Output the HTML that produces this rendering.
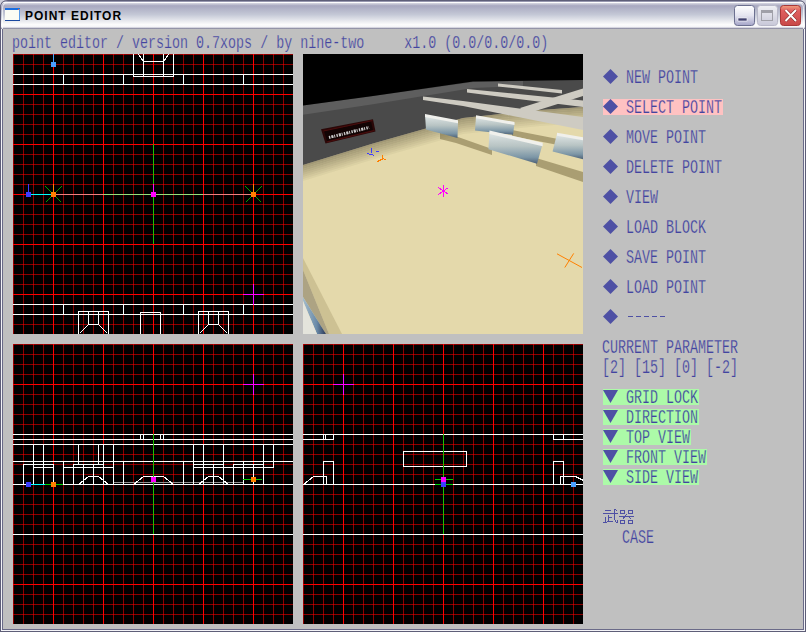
<!DOCTYPE html>
<html><head><meta charset="utf-8"><style>
html,body{margin:0;padding:0;width:806px;height:632px;overflow:hidden;background:#d0d0dc}
.t{position:absolute;white-space:pre;font-family:"Liberation Mono",monospace;color:#4244a0;line-height:16px;transform-origin:0 0;}
.title{position:absolute;left:25px;top:7px;font-family:"Liberation Sans",sans-serif;font-weight:bold;font-size:12px;line-height:18px;color:#000;letter-spacing:1px;white-space:pre}
</style></head><body>
<svg width="806" height="632" style="position:absolute;left:0;top:0">
<defs>
<linearGradient id="tb" gradientUnits="userSpaceOnUse" x1="0" y1="0" x2="0" y2="29">
<stop offset="0" stop-color="#5e5e78"/>
<stop offset="0.035" stop-color="#5e5e78"/>
<stop offset="0.036" stop-color="#9898b0"/>
<stop offset="0.07" stop-color="#9898b0"/>
<stop offset="0.071" stop-color="#f8f8fc"/>
<stop offset="0.105" stop-color="#f8f8fc"/>
<stop offset="0.12" stop-color="#d0d0dc"/>
<stop offset="0.2" stop-color="#a8a8c0"/>
<stop offset="0.5" stop-color="#c4c8d6"/>
<stop offset="0.85" stop-color="#fcfcfc"/>
<stop offset="0.93" stop-color="#f4f4f8"/>
<stop offset="0.965" stop-color="#b8b8c8"/>
<stop offset="1" stop-color="#707088"/>
</linearGradient>
<linearGradient id="minb" x1="0" y1="0" x2="0" y2="1">
<stop offset="0" stop-color="#ffffff"/><stop offset="0.5" stop-color="#e4e4f0"/><stop offset="1" stop-color="#a4a4c8"/></linearGradient>
<linearGradient id="maxb" x1="0" y1="0" x2="0" y2="1">
<stop offset="0" stop-color="#f0f0f4"/><stop offset="1" stop-color="#c8c8d8"/></linearGradient>
<linearGradient id="clsb" x1="0" y1="0" x2="0" y2="1">
<stop offset="0" stop-color="#f0a080"/><stop offset="0.25" stop-color="#e06060"/><stop offset="1" stop-color="#c84848"/></linearGradient>
</defs>
<rect x="0" y="0" width="806" height="632" fill="#d0d0dc" />
<path d="M0,8 Q0,0 8,0 L798,0 Q806,0 806,8 L806,632 L0,632 Z" fill="#5e5e78"/>
<path d="M1,8 Q1,1 8,1 L798,1 Q805,1 805,8 L805,631 L1,631 Z" fill="#f4f4f8"/>
<path d="M1,8 Q1,1 8,1 L798,1 Q805,1 805,8 L805,29 L1,29 Z" fill="url(#tb)"/>
<path d="M2.5,29 L2.5,8.5 Q2.5,2.5 8.5,2.5 L797.5,2.5 Q803.5,2.5 803.5,8.5 L803.5,29" fill="none" stroke="#ffffff" stroke-opacity="0.7"/>
<rect x="2" y="29" width="802" height="601" fill="#6a6a88" />
<rect x="3" y="29" width="800" height="600" fill="#c0c0c0" />
<rect x="5" y="8" width="15" height="2" fill="#1a6ee0" />
<rect x="5" y="10" width="14" height="10" fill="#fcfcf4" />
<rect x="19" y="9" width="1" height="11" fill="#5a9ae8" />
<rect x="5" y="20" width="15" height="1" fill="#1a48a0" />
<rect x="18" y="9" width="1" height="1" fill="#f06030" />
<rect x="734.5" y="5.5" width="20" height="20" rx="3" fill="url(#minb)" stroke="#6c7090"/>
<rect x="738" y="18" width="9" height="3" fill="#404070" stroke="#ffffff" stroke-width="0.6"/>
<rect x="757.5" y="5.5" width="20" height="20" rx="3" fill="url(#maxb)" stroke="#b8b8c8"/>
<rect x="761.5" y="10.5" width="11" height="10" fill="none" stroke="#a0a0a8"/>
<rect x="761" y="10" width="12" height="3" fill="#a0a0a8" />
<rect x="780.5" y="5.5" width="20" height="20" rx="3" fill="url(#clsb)" stroke="#a83838"/>
<path d="M785.5,10 L796,21 M796,10 L785.5,21" stroke="#7a2020" stroke-width="3.2"/>
<path d="M785.5,10 L796,21 M796,10 L785.5,21" stroke="#ffffff" stroke-width="2"/>
<g shape-rendering="crispEdges">
</g>
<rect x="13" y="54" width="280" height="280" fill="#000" />
<rect x="13" y="54" width="1" height="280" fill="rgba(255,0,0,0.55)" />
<rect x="23" y="54" width="1" height="280" fill="rgba(255,0,0,0.55)" />
<rect x="33" y="54" width="1" height="280" fill="rgba(255,0,0,0.55)" />
<rect x="43" y="54" width="1" height="280" fill="rgba(255,0,0,0.55)" />
<rect x="63" y="54" width="1" height="280" fill="rgba(255,0,0,0.55)" />
<rect x="73" y="54" width="1" height="280" fill="rgba(255,0,0,0.55)" />
<rect x="83" y="54" width="1" height="280" fill="rgba(255,0,0,0.55)" />
<rect x="93" y="54" width="1" height="280" fill="rgba(255,0,0,0.55)" />
<rect x="113" y="54" width="1" height="280" fill="rgba(255,0,0,0.55)" />
<rect x="123" y="54" width="1" height="280" fill="rgba(255,0,0,0.55)" />
<rect x="133" y="54" width="1" height="280" fill="rgba(255,0,0,0.55)" />
<rect x="143" y="54" width="1" height="280" fill="rgba(255,0,0,0.55)" />
<rect x="163" y="54" width="1" height="280" fill="rgba(255,0,0,0.55)" />
<rect x="173" y="54" width="1" height="280" fill="rgba(255,0,0,0.55)" />
<rect x="183" y="54" width="1" height="280" fill="rgba(255,0,0,0.55)" />
<rect x="193" y="54" width="1" height="280" fill="rgba(255,0,0,0.55)" />
<rect x="213" y="54" width="1" height="280" fill="rgba(255,0,0,0.55)" />
<rect x="223" y="54" width="1" height="280" fill="rgba(255,0,0,0.55)" />
<rect x="233" y="54" width="1" height="280" fill="rgba(255,0,0,0.55)" />
<rect x="243" y="54" width="1" height="280" fill="rgba(255,0,0,0.55)" />
<rect x="263" y="54" width="1" height="280" fill="rgba(255,0,0,0.55)" />
<rect x="273" y="54" width="1" height="280" fill="rgba(255,0,0,0.55)" />
<rect x="283" y="54" width="1" height="280" fill="rgba(255,0,0,0.55)" />
<rect x="13" y="54" width="280" height="1" fill="rgba(255,0,0,0.55)" />
<rect x="13" y="64" width="280" height="1" fill="rgba(255,0,0,0.55)" />
<rect x="13" y="74" width="280" height="1" fill="rgba(255,0,0,0.55)" />
<rect x="13" y="84" width="280" height="1" fill="rgba(255,0,0,0.55)" />
<rect x="13" y="104" width="280" height="1" fill="rgba(255,0,0,0.55)" />
<rect x="13" y="114" width="280" height="1" fill="rgba(255,0,0,0.55)" />
<rect x="13" y="124" width="280" height="1" fill="rgba(255,0,0,0.55)" />
<rect x="13" y="134" width="280" height="1" fill="rgba(255,0,0,0.55)" />
<rect x="13" y="154" width="280" height="1" fill="rgba(255,0,0,0.55)" />
<rect x="13" y="164" width="280" height="1" fill="rgba(255,0,0,0.55)" />
<rect x="13" y="174" width="280" height="1" fill="rgba(255,0,0,0.55)" />
<rect x="13" y="184" width="280" height="1" fill="rgba(255,0,0,0.55)" />
<rect x="13" y="204" width="280" height="1" fill="rgba(255,0,0,0.55)" />
<rect x="13" y="214" width="280" height="1" fill="rgba(255,0,0,0.55)" />
<rect x="13" y="224" width="280" height="1" fill="rgba(255,0,0,0.55)" />
<rect x="13" y="234" width="280" height="1" fill="rgba(255,0,0,0.55)" />
<rect x="13" y="254" width="280" height="1" fill="rgba(255,0,0,0.55)" />
<rect x="13" y="264" width="280" height="1" fill="rgba(255,0,0,0.55)" />
<rect x="13" y="274" width="280" height="1" fill="rgba(255,0,0,0.55)" />
<rect x="13" y="284" width="280" height="1" fill="rgba(255,0,0,0.55)" />
<rect x="13" y="304" width="280" height="1" fill="rgba(255,0,0,0.55)" />
<rect x="13" y="314" width="280" height="1" fill="rgba(255,0,0,0.55)" />
<rect x="13" y="324" width="280" height="1" fill="rgba(255,0,0,0.55)" />
<rect x="53" y="54" width="1" height="280" fill="#ff0000" />
<rect x="103" y="54" width="1" height="280" fill="#ff0000" />
<rect x="153" y="54" width="1" height="280" fill="#ff0000" />
<rect x="203" y="54" width="1" height="280" fill="#ff0000" />
<rect x="253" y="54" width="1" height="280" fill="#ff0000" />
<rect x="13" y="94" width="280" height="1" fill="#ff0000" />
<rect x="13" y="144" width="280" height="1" fill="#ff0000" />
<rect x="13" y="194" width="280" height="1" fill="#ff0000" />
<rect x="13" y="244" width="280" height="1" fill="#ff0000" />
<rect x="13" y="294" width="280" height="1" fill="#ff0000" />
<g shape-rendering="crispEdges">
<rect x="13" y="74" width="280" height="1" fill="#ffffff" />
<rect x="13" y="84" width="280" height="1" fill="#ffffff" />
<rect x="13" y="304" width="280" height="1" fill="#ffffff" />
<rect x="13" y="314" width="280" height="1" fill="#ffffff" />
<rect x="63" y="74" width="1" height="11" fill="#ffffff" />
<rect x="63" y="304" width="1" height="11" fill="#ffffff" />
<rect x="123" y="74" width="1" height="11" fill="#ffffff" />
<rect x="123" y="304" width="1" height="11" fill="#ffffff" />
<rect x="183" y="74" width="1" height="11" fill="#ffffff" />
<rect x="183" y="304" width="1" height="11" fill="#ffffff" />
<rect x="243" y="74" width="1" height="11" fill="#ffffff" />
<rect x="243" y="304" width="1" height="11" fill="#ffffff" />
<rect x="133" y="54" width="1" height="23" fill="#ffffff" />
<rect x="143" y="54" width="1" height="23" fill="#ffffff" />
<rect x="163" y="54" width="1" height="23" fill="#ffffff" />
<rect x="173" y="54" width="1" height="23" fill="#ffffff" />
<rect x="143" y="61" width="21" height="1" fill="#ffffff" />
<rect x="133" y="76" width="41" height="1" fill="#ffffff" />
<rect x="78" y="311" width="1" height="23" fill="#ffffff" />
<rect x="108" y="311" width="1" height="23" fill="#ffffff" />
<rect x="88" y="311" width="1" height="14" fill="#ffffff" />
<rect x="98" y="311" width="1" height="14" fill="#ffffff" />
<rect x="78" y="311" width="31" height="1" fill="#ffffff" />
<rect x="88" y="324" width="11" height="1" fill="#ffffff" />
<rect x="198" y="311" width="1" height="23" fill="#ffffff" />
<rect x="228" y="311" width="1" height="23" fill="#ffffff" />
<rect x="208" y="311" width="1" height="14" fill="#ffffff" />
<rect x="218" y="311" width="1" height="14" fill="#ffffff" />
<rect x="198" y="311" width="31" height="1" fill="#ffffff" />
<rect x="208" y="324" width="11" height="1" fill="#ffffff" />
<rect x="140" y="312" width="1" height="22" fill="#ffffff" />
<rect x="160" y="312" width="1" height="22" fill="#ffffff" />
<rect x="140" y="312" width="21" height="1" fill="#ffffff" />
</g>
<line x1="138.5" y1="54.5" x2="143.5" y2="61.5" stroke="#ffffff" stroke-width="1" shape-rendering="crispEdges"/>
<line x1="168.5" y1="54.5" x2="163.5" y2="61.5" stroke="#ffffff" stroke-width="1" shape-rendering="crispEdges"/>
<line x1="88.5" y1="324.5" x2="79.5" y2="333.5" stroke="#ffffff" stroke-width="1" shape-rendering="crispEdges"/>
<line x1="98.5" y1="324.5" x2="107.5" y2="333.5" stroke="#ffffff" stroke-width="1" shape-rendering="crispEdges"/>
<line x1="208.5" y1="324.5" x2="199.5" y2="333.5" stroke="#ffffff" stroke-width="1" shape-rendering="crispEdges"/>
<line x1="218.5" y1="324.5" x2="227.5" y2="333.5" stroke="#ffffff" stroke-width="1" shape-rendering="crispEdges"/>
<g shape-rendering="crispEdges">
<rect x="53" y="54" width="1" height="8" fill="#4aa0ff" />
<rect x="51" y="62" width="5" height="5" fill="#4aa0ff" />
<rect x="31" y="194" width="20" height="1" fill="#00ffff" />
<rect x="56" y="194" width="47" height="1" fill="#f08080" />
<rect x="103" y="194" width="48" height="1" fill="#96e07a" />
<rect x="156" y="194" width="47" height="1" fill="#96e07a" />
<rect x="203" y="194" width="48" height="1" fill="#f08080" />
<rect x="153" y="144" width="1" height="40" fill="#20c000" />
<rect x="153" y="197" width="1" height="47" fill="#20c000" />
<rect x="28" y="184" width="1" height="8" fill="#3c3cff" />
<rect x="26" y="192" width="5" height="5" fill="#3c3cff" />
<rect x="53" y="184" width="1" height="8" fill="#ff8000" />
<rect x="153" y="184" width="1" height="8" fill="#ff00ff" />
<rect x="151" y="192" width="5" height="5" fill="#ff00ff" />
<rect x="253" y="184" width="1" height="8" fill="#ff8000" />
<rect x="243" y="294" width="21" height="1" fill="#ff00ff" />
<rect x="253" y="284" width="1" height="21" fill="#ff00ff" />
</g>
<line x1="45.5" y1="186.5" x2="61.5" y2="202.5" stroke="#00a000" stroke-width="1" shape-rendering="crispEdges"/>
<line x1="45.5" y1="202.5" x2="61.5" y2="186.5" stroke="#00a000" stroke-width="1" shape-rendering="crispEdges"/>
<line x1="245.5" y1="186.5" x2="261.5" y2="202.5" stroke="#00a000" stroke-width="1" shape-rendering="crispEdges"/>
<line x1="245.5" y1="202.5" x2="261.5" y2="186.5" stroke="#00a000" stroke-width="1" shape-rendering="crispEdges"/>
<g shape-rendering="crispEdges">
<rect x="51" y="192" width="5" height="5" fill="#ff8000" />
<rect x="251" y="192" width="5" height="5" fill="#ff8000" />
</g>
<svg x="303" y="54" width="280" height="280" viewBox="303 54 280 280">
<defs>
<linearGradient id="bar" x1="0" y1="0" x2="0" y2="1">
<stop offset="0" stop-color="#e2e8e8"/><stop offset="0.45" stop-color="#b8c4c4"/><stop offset="0.8" stop-color="#7c96a6"/><stop offset="1" stop-color="#4c6076"/></linearGradient>
<linearGradient id="shad" x1="0" y1="0" x2="0" y2="1">
<stop offset="0" stop-color="#6e6a5a"/><stop offset="0.5" stop-color="#a89e7c"/><stop offset="1" stop-color="#e2d6a6" stop-opacity="0"/></linearGradient>
<linearGradient id="blueedge" x1="0" y1="0" x2="1" y2="0">
<stop offset="0" stop-color="#a4bccc"/><stop offset="0.6" stop-color="#6a8aa8"/><stop offset="1" stop-color="#2a3656"/></linearGradient>
</defs>
<rect x="303" y="54" width="280" height="280" fill="#e4d9ab" />
<polygon points="303,165 373,143.4 463,118 540,110 583,107 583,109 540,112 463,120 373,145.4 303,167" fill="rgba(96,88,64,0.500)" />
<polygon points="303,167 373,145.4 463,120 540,112 583,109 583,111 540,114 463,122 373,147.4 303,169" fill="rgba(96,88,64,0.438)" />
<polygon points="303,169 373,147.4 463,122 540,114 583,111 583,113 540,116 463,124 373,149.4 303,171" fill="rgba(96,88,64,0.375)" />
<polygon points="303,171 373,149.4 463,124 540,116 583,113 583,115 540,118 463,126 373,151.4 303,173" fill="rgba(96,88,64,0.312)" />
<polygon points="303,173 373,151.4 463,126 540,118 583,115 583,117 540,120 463,128 373,153.4 303,175" fill="rgba(96,88,64,0.250)" />
<polygon points="303,175 373,153.4 463,128 540,120 583,117 583,119 540,122 463,130 373,155.4 303,177" fill="rgba(96,88,64,0.188)" />
<polygon points="303,177 373,155.4 463,130 540,122 583,119 583,121 540,124 463,132 373,157.4 303,179" fill="rgba(96,88,64,0.125)" />
<polygon points="303,179 373,157.4 463,132 540,124 583,121 583,123 540,126 463,134 373,159.4 303,181" fill="rgba(96,88,64,0.062)" />
<polygon points="303,104.6 373,95 473,80.5 583,79 583,107 540,110 463,118 373,143.4 303,165" fill="#4a4a4a" />
<polygon points="303,105.6 373,96 473,82 523,81 523,86 473,88 373,104.3 303,114.7" fill="#5e5e5e" />
<polygon points="303,54 583,54 583,80 473,81.5 373,96 303,105.6" fill="#000" />
<polygon points="498,83.5 562,90 562,93.5 498,86.5" fill="#cecbc2" />
<polygon points="467,89 583,100.5 583,107 467,92.5" fill="#cecbc2" />
<polygon points="423,96.5 463,100.9 583,117 583,130 463,106 423,100" fill="#cecbc2" />
<polygon points="520,108 583,88.5 583,96 526,114" fill="#cecbc2" />
<polygon points="440,133 458,137 492,149 492,155 456,143 440,139" fill="rgba(100,86,44,0.45)" />
<polygon points="512,130 558,139 558,145 512,136" fill="rgba(100,86,44,0.45)" />
<polygon points="536,158 583,172 583,182 536,166" fill="rgba(100,86,44,0.45)" />
<polygon points="425,115 458,121.3 457.5,138 426,129.5" fill="url(#bar)" />
<polygon points="476,116.3 514.5,123 513,134.8 475,130.5" fill="url(#bar)" />
<polygon points="489.5,131.6 542.7,143.8 537,163.7 488.4,149.3" fill="url(#bar)" />
<polygon points="557,133.8 583,138.2 583,159.3 552.6,151.5" fill="url(#bar)" />
<polygon points="425,114 458,120.3 458,123.3 425,117" fill="#f0f0ec" />
<polygon points="476,115.3 514.5,122 514.5,125 476,118.3" fill="#f0f0ec" />
<polygon points="489.5,130.6 542.7,142.8 542.7,146.3 489.5,134.1" fill="#f0f0ec" />
<polygon points="557,132.8 583,137.2 583,140.2 557,135.8" fill="#f0f0ec" />
<polygon points="321,129.3 373,119.3 375.5,131.4 325.5,143.5" fill="#2a0808" />
<polygon points="324,131 371,121.5 373,130 327,141" fill="#120404" />
<path d="M329,137.5 L369,127.5" stroke="#c8c8c8" stroke-width="3" stroke-dasharray="1.4 1 2.2 0.8 1 1.3"/>
<path d="M323.5,131 L372.5,120.5 M327,142 L374.5,130.5" stroke="#4a0c0c" stroke-width="1"/>
<polygon points="303,258 342,334 329,334 303,270" fill="#cdc193" />
<polygon points="303,270 329,334 326,334 303,297" fill="#ada383" />
<polygon points="303,297 326,334 317,334 303,301" fill="url(#blueedge)" />
<polygon points="303,301 317,334 303,334" fill="#e4e4dc" />
<g stroke-width="1">
<line x1="371.5" y1="147.5" x2="371.5" y2="152.5" stroke="#3c3cff" stroke-width="1" shape-rendering="crispEdges"/>
<line x1="367.5" y1="153.5" x2="374.5" y2="155.5" stroke="#3c3cff" stroke-width="1" shape-rendering="crispEdges"/>
<line x1="375.5" y1="151.5" x2="378.5" y2="151.5" stroke="#3c3cff" stroke-width="1" shape-rendering="crispEdges"/>
<line x1="382.5" y1="154.5" x2="382.5" y2="158.5" stroke="#ff8000" stroke-width="1" shape-rendering="crispEdges"/>
<line x1="377.5" y1="161.5" x2="383.5" y2="158.5" stroke="#ff8000" stroke-width="1" shape-rendering="crispEdges"/>
<line x1="383.5" y1="158.5" x2="386.5" y2="160.5" stroke="#ff8000" stroke-width="1" shape-rendering="crispEdges"/>
</g>
<line x1="443.5" y1="184.5" x2="443.5" y2="196.5" stroke="#ff00ff" stroke-width="1" shape-rendering="crispEdges"/>
<line x1="438.5" y1="187.5" x2="448.5" y2="194.5" stroke="#ff00ff" stroke-width="1" shape-rendering="crispEdges"/>
<line x1="438.5" y1="194.5" x2="448.5" y2="187.5" stroke="#ff00ff" stroke-width="1" shape-rendering="crispEdges"/>
<line x1="557" y1="253.8" x2="582" y2="267.5" stroke="#ff8000" stroke-width="1"/>
<line x1="573.7" y1="253.4" x2="564.8" y2="267.5" stroke="#ff8000" stroke-width="1"/>
</svg>
<rect x="13" y="344" width="280" height="280" fill="#000" />
<rect x="13" y="344" width="1" height="280" fill="rgba(255,0,0,0.55)" />
<rect x="23" y="344" width="1" height="280" fill="rgba(255,0,0,0.55)" />
<rect x="33" y="344" width="1" height="280" fill="rgba(255,0,0,0.55)" />
<rect x="43" y="344" width="1" height="280" fill="rgba(255,0,0,0.55)" />
<rect x="63" y="344" width="1" height="280" fill="rgba(255,0,0,0.55)" />
<rect x="73" y="344" width="1" height="280" fill="rgba(255,0,0,0.55)" />
<rect x="83" y="344" width="1" height="280" fill="rgba(255,0,0,0.55)" />
<rect x="93" y="344" width="1" height="280" fill="rgba(255,0,0,0.55)" />
<rect x="113" y="344" width="1" height="280" fill="rgba(255,0,0,0.55)" />
<rect x="123" y="344" width="1" height="280" fill="rgba(255,0,0,0.55)" />
<rect x="133" y="344" width="1" height="280" fill="rgba(255,0,0,0.55)" />
<rect x="143" y="344" width="1" height="280" fill="rgba(255,0,0,0.55)" />
<rect x="163" y="344" width="1" height="280" fill="rgba(255,0,0,0.55)" />
<rect x="173" y="344" width="1" height="280" fill="rgba(255,0,0,0.55)" />
<rect x="183" y="344" width="1" height="280" fill="rgba(255,0,0,0.55)" />
<rect x="193" y="344" width="1" height="280" fill="rgba(255,0,0,0.55)" />
<rect x="213" y="344" width="1" height="280" fill="rgba(255,0,0,0.55)" />
<rect x="223" y="344" width="1" height="280" fill="rgba(255,0,0,0.55)" />
<rect x="233" y="344" width="1" height="280" fill="rgba(255,0,0,0.55)" />
<rect x="243" y="344" width="1" height="280" fill="rgba(255,0,0,0.55)" />
<rect x="263" y="344" width="1" height="280" fill="rgba(255,0,0,0.55)" />
<rect x="273" y="344" width="1" height="280" fill="rgba(255,0,0,0.55)" />
<rect x="283" y="344" width="1" height="280" fill="rgba(255,0,0,0.55)" />
<rect x="13" y="344" width="280" height="1" fill="rgba(255,0,0,0.55)" />
<rect x="13" y="354" width="280" height="1" fill="rgba(255,0,0,0.55)" />
<rect x="13" y="364" width="280" height="1" fill="rgba(255,0,0,0.55)" />
<rect x="13" y="374" width="280" height="1" fill="rgba(255,0,0,0.55)" />
<rect x="13" y="394" width="280" height="1" fill="rgba(255,0,0,0.55)" />
<rect x="13" y="404" width="280" height="1" fill="rgba(255,0,0,0.55)" />
<rect x="13" y="414" width="280" height="1" fill="rgba(255,0,0,0.55)" />
<rect x="13" y="424" width="280" height="1" fill="rgba(255,0,0,0.55)" />
<rect x="13" y="444" width="280" height="1" fill="rgba(255,0,0,0.55)" />
<rect x="13" y="454" width="280" height="1" fill="rgba(255,0,0,0.55)" />
<rect x="13" y="464" width="280" height="1" fill="rgba(255,0,0,0.55)" />
<rect x="13" y="474" width="280" height="1" fill="rgba(255,0,0,0.55)" />
<rect x="13" y="494" width="280" height="1" fill="rgba(255,0,0,0.55)" />
<rect x="13" y="504" width="280" height="1" fill="rgba(255,0,0,0.55)" />
<rect x="13" y="514" width="280" height="1" fill="rgba(255,0,0,0.55)" />
<rect x="13" y="524" width="280" height="1" fill="rgba(255,0,0,0.55)" />
<rect x="13" y="544" width="280" height="1" fill="rgba(255,0,0,0.55)" />
<rect x="13" y="554" width="280" height="1" fill="rgba(255,0,0,0.55)" />
<rect x="13" y="564" width="280" height="1" fill="rgba(255,0,0,0.55)" />
<rect x="13" y="574" width="280" height="1" fill="rgba(255,0,0,0.55)" />
<rect x="13" y="594" width="280" height="1" fill="rgba(255,0,0,0.55)" />
<rect x="13" y="604" width="280" height="1" fill="rgba(255,0,0,0.55)" />
<rect x="13" y="614" width="280" height="1" fill="rgba(255,0,0,0.55)" />
<rect x="53" y="344" width="1" height="280" fill="#ff0000" />
<rect x="103" y="344" width="1" height="280" fill="#ff0000" />
<rect x="153" y="344" width="1" height="280" fill="#ff0000" />
<rect x="203" y="344" width="1" height="280" fill="#ff0000" />
<rect x="253" y="344" width="1" height="280" fill="#ff0000" />
<rect x="13" y="384" width="280" height="1" fill="#ff0000" />
<rect x="13" y="434" width="280" height="1" fill="#ff0000" />
<rect x="13" y="484" width="280" height="1" fill="#ff0000" />
<rect x="13" y="534" width="280" height="1" fill="#ff0000" />
<rect x="13" y="584" width="280" height="1" fill="#ff0000" />
<g shape-rendering="crispEdges">
<rect x="113" y="482" width="131" height="1" fill="#909090" />
<rect x="13" y="434" width="280" height="1" fill="#ffffff" />
<rect x="13" y="439" width="280" height="1" fill="#ffffff" />
<rect x="13" y="444" width="280" height="1" fill="#ffffff" />
<rect x="13" y="461" width="280" height="1" fill="#ffffff" />
<rect x="13" y="484" width="280" height="1" fill="#ffffff" />
<rect x="13" y="534" width="280" height="1" fill="#ffffff" />
<rect x="140" y="434" width="1" height="6" fill="#ffffff" />
<rect x="143" y="434" width="1" height="6" fill="#ffffff" />
<rect x="160" y="434" width="1" height="6" fill="#ffffff" />
<rect x="163" y="434" width="1" height="6" fill="#ffffff" />
<rect x="23" y="464" width="1" height="21" fill="#ffffff" />
<rect x="33" y="444" width="1" height="41" fill="#ffffff" />
<rect x="43" y="444" width="1" height="41" fill="#ffffff" />
<rect x="53" y="464" width="1" height="21" fill="#ffffff" />
<rect x="63" y="461" width="1" height="24" fill="#ffffff" />
<rect x="73" y="464" width="1" height="21" fill="#ffffff" />
<rect x="78" y="444" width="1" height="21" fill="#ffffff" />
<rect x="83" y="464" width="1" height="21" fill="#ffffff" />
<rect x="93" y="464" width="1" height="21" fill="#ffffff" />
<rect x="98" y="444" width="1" height="21" fill="#ffffff" />
<rect x="103" y="444" width="1" height="41" fill="#ffffff" />
<rect x="113" y="444" width="1" height="41" fill="#ffffff" />
<rect x="123" y="461" width="1" height="24" fill="#ffffff" />
<rect x="183" y="461" width="1" height="24" fill="#ffffff" />
<rect x="193" y="444" width="1" height="41" fill="#ffffff" />
<rect x="203" y="444" width="1" height="41" fill="#ffffff" />
<rect x="213" y="464" width="1" height="21" fill="#ffffff" />
<rect x="223" y="444" width="1" height="41" fill="#ffffff" />
<rect x="233" y="464" width="1" height="21" fill="#ffffff" />
<rect x="243" y="461" width="1" height="24" fill="#ffffff" />
<rect x="253" y="464" width="1" height="21" fill="#ffffff" />
<rect x="263" y="444" width="1" height="41" fill="#ffffff" />
<rect x="273" y="444" width="1" height="24" fill="#ffffff" />
<rect x="23" y="464" width="31" height="1" fill="#ffffff" />
<rect x="73" y="464" width="31" height="1" fill="#ffffff" />
<rect x="193" y="464" width="31" height="1" fill="#ffffff" />
<rect x="233" y="464" width="31" height="1" fill="#ffffff" />
<rect x="33" y="467" width="21" height="1" fill="#ffffff" />
<rect x="63" y="467" width="51" height="1" fill="#ffffff" />
<rect x="193" y="467" width="81" height="1" fill="#ffffff" />
<rect x="88" y="476" width="11" height="1" fill="#ffffff" />
<rect x="143" y="476" width="21" height="1" fill="#ffffff" />
<rect x="208" y="476" width="11" height="1" fill="#ffffff" />
</g>
<line x1="78.5" y1="484.5" x2="88.5" y2="476.5" stroke="#ffffff" stroke-width="1" shape-rendering="crispEdges"/>
<line x1="133.5" y1="484.5" x2="143.5" y2="476.5" stroke="#ffffff" stroke-width="1" shape-rendering="crispEdges"/>
<line x1="198.5" y1="484.5" x2="208.5" y2="476.5" stroke="#ffffff" stroke-width="1" shape-rendering="crispEdges"/>
<line x1="98.5" y1="476.5" x2="108.5" y2="484.5" stroke="#ffffff" stroke-width="1" shape-rendering="crispEdges"/>
<line x1="163.5" y1="476.5" x2="173.5" y2="484.5" stroke="#ffffff" stroke-width="1" shape-rendering="crispEdges"/>
<line x1="218.5" y1="476.5" x2="228.5" y2="484.5" stroke="#ffffff" stroke-width="1" shape-rendering="crispEdges"/>
<g shape-rendering="crispEdges">
<rect x="153" y="434" width="1" height="43" fill="#20c000" />
<rect x="153" y="482" width="1" height="52" fill="#20c000" />
<rect x="31" y="484" width="14" height="1" fill="#00ffff" />
<rect x="45" y="484" width="6" height="1" fill="#00d000" />
<rect x="56" y="484" width="7" height="1" fill="#00d000" />
<rect x="26" y="482" width="5" height="5" fill="#3c3cff" />
<rect x="51" y="482" width="5" height="5" fill="#ff8000" />
<rect x="151" y="477" width="5" height="5" fill="#ff00ff" />
<rect x="243" y="479" width="19" height="1" fill="#00d000" />
<rect x="251" y="477" width="5" height="5" fill="#ff8000" />
<rect x="243" y="384" width="21" height="1" fill="#ff00ff" />
<rect x="253" y="374" width="1" height="21" fill="#ff00ff" />
</g>
<rect x="303" y="344" width="280" height="280" fill="#000" />
<rect x="303" y="344" width="1" height="280" fill="rgba(255,0,0,0.55)" />
<rect x="313" y="344" width="1" height="280" fill="rgba(255,0,0,0.55)" />
<rect x="323" y="344" width="1" height="280" fill="rgba(255,0,0,0.55)" />
<rect x="333" y="344" width="1" height="280" fill="rgba(255,0,0,0.55)" />
<rect x="353" y="344" width="1" height="280" fill="rgba(255,0,0,0.55)" />
<rect x="363" y="344" width="1" height="280" fill="rgba(255,0,0,0.55)" />
<rect x="373" y="344" width="1" height="280" fill="rgba(255,0,0,0.55)" />
<rect x="383" y="344" width="1" height="280" fill="rgba(255,0,0,0.55)" />
<rect x="403" y="344" width="1" height="280" fill="rgba(255,0,0,0.55)" />
<rect x="413" y="344" width="1" height="280" fill="rgba(255,0,0,0.55)" />
<rect x="423" y="344" width="1" height="280" fill="rgba(255,0,0,0.55)" />
<rect x="433" y="344" width="1" height="280" fill="rgba(255,0,0,0.55)" />
<rect x="453" y="344" width="1" height="280" fill="rgba(255,0,0,0.55)" />
<rect x="463" y="344" width="1" height="280" fill="rgba(255,0,0,0.55)" />
<rect x="473" y="344" width="1" height="280" fill="rgba(255,0,0,0.55)" />
<rect x="483" y="344" width="1" height="280" fill="rgba(255,0,0,0.55)" />
<rect x="503" y="344" width="1" height="280" fill="rgba(255,0,0,0.55)" />
<rect x="513" y="344" width="1" height="280" fill="rgba(255,0,0,0.55)" />
<rect x="523" y="344" width="1" height="280" fill="rgba(255,0,0,0.55)" />
<rect x="533" y="344" width="1" height="280" fill="rgba(255,0,0,0.55)" />
<rect x="553" y="344" width="1" height="280" fill="rgba(255,0,0,0.55)" />
<rect x="563" y="344" width="1" height="280" fill="rgba(255,0,0,0.55)" />
<rect x="573" y="344" width="1" height="280" fill="rgba(255,0,0,0.55)" />
<rect x="303" y="344" width="280" height="1" fill="rgba(255,0,0,0.55)" />
<rect x="303" y="354" width="280" height="1" fill="rgba(255,0,0,0.55)" />
<rect x="303" y="364" width="280" height="1" fill="rgba(255,0,0,0.55)" />
<rect x="303" y="374" width="280" height="1" fill="rgba(255,0,0,0.55)" />
<rect x="303" y="394" width="280" height="1" fill="rgba(255,0,0,0.55)" />
<rect x="303" y="404" width="280" height="1" fill="rgba(255,0,0,0.55)" />
<rect x="303" y="414" width="280" height="1" fill="rgba(255,0,0,0.55)" />
<rect x="303" y="424" width="280" height="1" fill="rgba(255,0,0,0.55)" />
<rect x="303" y="444" width="280" height="1" fill="rgba(255,0,0,0.55)" />
<rect x="303" y="454" width="280" height="1" fill="rgba(255,0,0,0.55)" />
<rect x="303" y="464" width="280" height="1" fill="rgba(255,0,0,0.55)" />
<rect x="303" y="474" width="280" height="1" fill="rgba(255,0,0,0.55)" />
<rect x="303" y="494" width="280" height="1" fill="rgba(255,0,0,0.55)" />
<rect x="303" y="504" width="280" height="1" fill="rgba(255,0,0,0.55)" />
<rect x="303" y="514" width="280" height="1" fill="rgba(255,0,0,0.55)" />
<rect x="303" y="524" width="280" height="1" fill="rgba(255,0,0,0.55)" />
<rect x="303" y="544" width="280" height="1" fill="rgba(255,0,0,0.55)" />
<rect x="303" y="554" width="280" height="1" fill="rgba(255,0,0,0.55)" />
<rect x="303" y="564" width="280" height="1" fill="rgba(255,0,0,0.55)" />
<rect x="303" y="574" width="280" height="1" fill="rgba(255,0,0,0.55)" />
<rect x="303" y="594" width="280" height="1" fill="rgba(255,0,0,0.55)" />
<rect x="303" y="604" width="280" height="1" fill="rgba(255,0,0,0.55)" />
<rect x="303" y="614" width="280" height="1" fill="rgba(255,0,0,0.55)" />
<rect x="343" y="344" width="1" height="280" fill="#ff0000" />
<rect x="393" y="344" width="1" height="280" fill="#ff0000" />
<rect x="443" y="344" width="1" height="280" fill="#ff0000" />
<rect x="493" y="344" width="1" height="280" fill="#ff0000" />
<rect x="543" y="344" width="1" height="280" fill="#ff0000" />
<rect x="303" y="384" width="280" height="1" fill="#ff0000" />
<rect x="303" y="434" width="280" height="1" fill="#ff0000" />
<rect x="303" y="484" width="280" height="1" fill="#ff0000" />
<rect x="303" y="534" width="280" height="1" fill="#ff0000" />
<rect x="303" y="584" width="280" height="1" fill="#ff0000" />
<g shape-rendering="crispEdges">
<rect x="303" y="434" width="280" height="1" fill="#ffffff" />
<rect x="303" y="484" width="280" height="1" fill="#ffffff" />
<rect x="303" y="534" width="280" height="1" fill="#ffffff" />
<rect x="303" y="439" width="31" height="1" fill="#ffffff" />
<rect x="553" y="439" width="30" height="1" fill="#ffffff" />
<rect x="323" y="434" width="1" height="6" fill="#ffffff" />
<rect x="325" y="434" width="1" height="6" fill="#ffffff" />
<rect x="333" y="434" width="1" height="6" fill="#ffffff" />
<rect x="553" y="434" width="1" height="6" fill="#ffffff" />
<rect x="563" y="434" width="1" height="6" fill="#ffffff" />
<rect x="323" y="461" width="1" height="24" fill="#ffffff" />
<rect x="333" y="461" width="1" height="24" fill="#ffffff" />
<rect x="323" y="461" width="11" height="1" fill="#ffffff" />
<rect x="553" y="461" width="1" height="24" fill="#ffffff" />
<rect x="563" y="461" width="1" height="24" fill="#ffffff" />
<rect x="553" y="461" width="11" height="1" fill="#ffffff" />
<rect x="313" y="476" width="14" height="1" fill="#ffffff" />
<rect x="326" y="476" width="1" height="9" fill="#ffffff" />
<rect x="560" y="476" width="16" height="1" fill="#ffffff" />
<rect x="560" y="476" width="1" height="9" fill="#ffffff" />
<rect x="403" y="451" width="64" height="1" fill="#ffffff" />
<rect x="403" y="466" width="64" height="1" fill="#ffffff" />
<rect x="403" y="451" width="1" height="16" fill="#ffffff" />
<rect x="466" y="451" width="1" height="16" fill="#ffffff" />
</g>
<line x1="303.5" y1="484.5" x2="313.5" y2="476.5" stroke="#ffffff" stroke-width="1" shape-rendering="crispEdges"/>
<line x1="575.5" y1="476.5" x2="583.5" y2="480.5" stroke="#ffffff" stroke-width="1" shape-rendering="crispEdges"/>
<g shape-rendering="crispEdges">
<rect x="443" y="434" width="1" height="43" fill="#20c000" />
<rect x="443" y="487" width="1" height="47" fill="#20c000" />
<rect x="435" y="479" width="18" height="1" fill="#00d000" />
<rect x="435" y="484" width="18" height="1" fill="#00d000" />
<rect x="441" y="477" width="5" height="5" fill="#ff00ff" />
<rect x="441" y="482" width="5" height="5" fill="#3c3cff" />
<rect x="571" y="482" width="5" height="5" fill="#4aa0ff" />
<rect x="333" y="384" width="21" height="1" fill="#ff00ff" />
<rect x="343" y="374" width="1" height="21" fill="#ff00ff" />
</g>
<rect x="603" y="99" width="120" height="16" fill="#ffc2c2" />
<rect x="603" y="389" width="96" height="16" fill="#acfaa8" />
<rect x="603" y="409" width="96" height="16" fill="#acfaa8" />
<rect x="603" y="429" width="88" height="16" fill="#acfaa8" />
<rect x="603" y="449" width="104" height="16" fill="#acfaa8" />
<rect x="603" y="469" width="96" height="16" fill="#acfaa8" />
<polygon points="603,76.5 610.5,69 618,76.5 610.5,84" fill="#4e50a4" />
<polygon points="603,106.5 610.5,99 618,106.5 610.5,114" fill="#4e50a4" />
<polygon points="603,136.5 610.5,129 618,136.5 610.5,144" fill="#4e50a4" />
<polygon points="603,166.5 610.5,159 618,166.5 610.5,174" fill="#4e50a4" />
<polygon points="603,196.5 610.5,189 618,196.5 610.5,204" fill="#4e50a4" />
<polygon points="603,226.5 610.5,219 618,226.5 610.5,234" fill="#4e50a4" />
<polygon points="603,256.5 610.5,249 618,256.5 610.5,264" fill="#4e50a4" />
<polygon points="603,286.5 610.5,279 618,286.5 610.5,294" fill="#4e50a4" />
<polygon points="603,316.5 610.5,309 618,316.5 610.5,324" fill="#4e50a4" />
<rect x="628" y="316" width="5" height="1" fill="#4e50a4" />
<rect x="636" y="316" width="5" height="1" fill="#4e50a4" />
<rect x="644" y="316" width="5" height="1" fill="#4e50a4" />
<rect x="652" y="316" width="5" height="1" fill="#4e50a4" />
<rect x="660" y="316" width="5" height="1" fill="#4e50a4" />
<polygon points="603,390 618,390 610.5,403" fill="#4e50a4" />
<polygon points="603,410 618,410 610.5,423" fill="#4e50a4" />
<polygon points="603,430 618,430 610.5,443" fill="#4e50a4" />
<polygon points="603,450 618,450 610.5,463" fill="#4e50a4" />
<polygon points="603,470 618,470 610.5,483" fill="#4e50a4" />
<g shape-rendering="crispEdges">
<rect x="605" y="510" width="6" height="1" fill="#4e50a4" />
<rect x="603" y="513" width="15" height="1" fill="#4e50a4" />
<rect x="614" y="509" width="1" height="11" fill="#4e50a4" />
<rect x="615" y="520" width="1" height="2" fill="#4e50a4" />
<rect x="616" y="522" width="2" height="1" fill="#4e50a4" />
<rect x="617" y="520" width="1" height="2" fill="#4e50a4" />
<rect x="615" y="509" width="1" height="1" fill="#4e50a4" />
<rect x="616" y="510" width="1" height="1" fill="#4e50a4" />
<rect x="608" y="515" width="1" height="7" fill="#4e50a4" />
<rect x="608" y="517" width="4" height="1" fill="#4e50a4" />
<rect x="605" y="517" width="1" height="6" fill="#4e50a4" />
<rect x="603" y="522" width="4" height="1" fill="#4e50a4" />
<rect x="607" y="521" width="6" height="1" fill="#4e50a4" />
<rect x="620" y="510" width="5" height="1" fill="#4e50a4" />
<rect x="620" y="513" width="5" height="1" fill="#4e50a4" />
<rect x="620" y="510" width="1" height="4" fill="#4e50a4" />
<rect x="624" y="510" width="1" height="4" fill="#4e50a4" />
<rect x="620" y="520" width="5" height="1" fill="#4e50a4" />
<rect x="620" y="523" width="5" height="1" fill="#4e50a4" />
<rect x="620" y="520" width="1" height="4" fill="#4e50a4" />
<rect x="624" y="520" width="1" height="4" fill="#4e50a4" />
<rect x="628" y="510" width="5" height="1" fill="#4e50a4" />
<rect x="628" y="513" width="5" height="1" fill="#4e50a4" />
<rect x="628" y="510" width="1" height="4" fill="#4e50a4" />
<rect x="632" y="510" width="1" height="4" fill="#4e50a4" />
<rect x="628" y="520" width="5" height="1" fill="#4e50a4" />
<rect x="628" y="523" width="5" height="1" fill="#4e50a4" />
<rect x="628" y="520" width="1" height="4" fill="#4e50a4" />
<rect x="632" y="520" width="1" height="4" fill="#4e50a4" />
<rect x="619" y="516" width="15" height="1" fill="#4e50a4" />
</g>
<line x1="626.5" y1="514.5" x2="622.5" y2="519.5" stroke="#4e50a4" stroke-width="1" shape-rendering="crispEdges"/>
<line x1="629.5" y1="517.5" x2="631.5" y2="519.5" stroke="#4e50a4" stroke-width="1" shape-rendering="crispEdges"/>
</svg>
<div class="title">POINT EDITOR</div>
<div class="t" style="left:12px;top:35px;font-size:18px;transform:scaleX(0.741);-webkit-text-stroke:0.25px #c0c0c0">point editor / version 0.7xops / by nine-two     x1.0 (0.0/0.0/0.0)</div><div class="t" style="left:626px;top:70px;font-size:20px;transform:scaleX(0.667);-webkit-text-stroke:0.25px #c0c0c0">NEW POINT</div><div class="t" style="left:626px;top:100px;font-size:20px;transform:scaleX(0.667);-webkit-text-stroke:0.25px #ffc2c2">SELECT POINT</div><div class="t" style="left:626px;top:130px;font-size:20px;transform:scaleX(0.667);-webkit-text-stroke:0.25px #c0c0c0">MOVE POINT</div><div class="t" style="left:626px;top:160px;font-size:20px;transform:scaleX(0.667);-webkit-text-stroke:0.25px #c0c0c0">DELETE POINT</div><div class="t" style="left:626px;top:190px;font-size:20px;transform:scaleX(0.667);-webkit-text-stroke:0.25px #c0c0c0">VIEW</div><div class="t" style="left:626px;top:220px;font-size:20px;transform:scaleX(0.667);-webkit-text-stroke:0.25px #c0c0c0">LOAD BLOCK</div><div class="t" style="left:626px;top:250px;font-size:20px;transform:scaleX(0.667);-webkit-text-stroke:0.25px #c0c0c0">SAVE POINT</div><div class="t" style="left:626px;top:280px;font-size:20px;transform:scaleX(0.667);-webkit-text-stroke:0.25px #c0c0c0">LOAD POINT</div><div class="t" style="left:602px;top:340px;font-size:20px;transform:scaleX(0.667);-webkit-text-stroke:0.25px #c0c0c0">CURRENT PARAMETER</div><div class="t" style="left:602px;top:360px;font-size:20px;transform:scaleX(0.667);-webkit-text-stroke:0.25px #c0c0c0">[2] [15] [0] [-2]</div><div class="t" style="left:626px;top:390px;font-size:20px;transform:scaleX(0.667);-webkit-text-stroke:0.25px #acfaa8">GRID LOCK</div><div class="t" style="left:626px;top:410px;font-size:20px;transform:scaleX(0.667);-webkit-text-stroke:0.25px #acfaa8">DIRECTION</div><div class="t" style="left:626px;top:430px;font-size:20px;transform:scaleX(0.667);-webkit-text-stroke:0.25px #acfaa8">TOP VIEW</div><div class="t" style="left:626px;top:450px;font-size:20px;transform:scaleX(0.667);-webkit-text-stroke:0.25px #acfaa8">FRONT VIEW</div><div class="t" style="left:626px;top:470px;font-size:20px;transform:scaleX(0.667);-webkit-text-stroke:0.25px #acfaa8">SIDE VIEW</div><div class="t" style="left:622px;top:530px;font-size:20px;transform:scaleX(0.667);-webkit-text-stroke:0.25px #c0c0c0">CASE</div>
</body></html>
